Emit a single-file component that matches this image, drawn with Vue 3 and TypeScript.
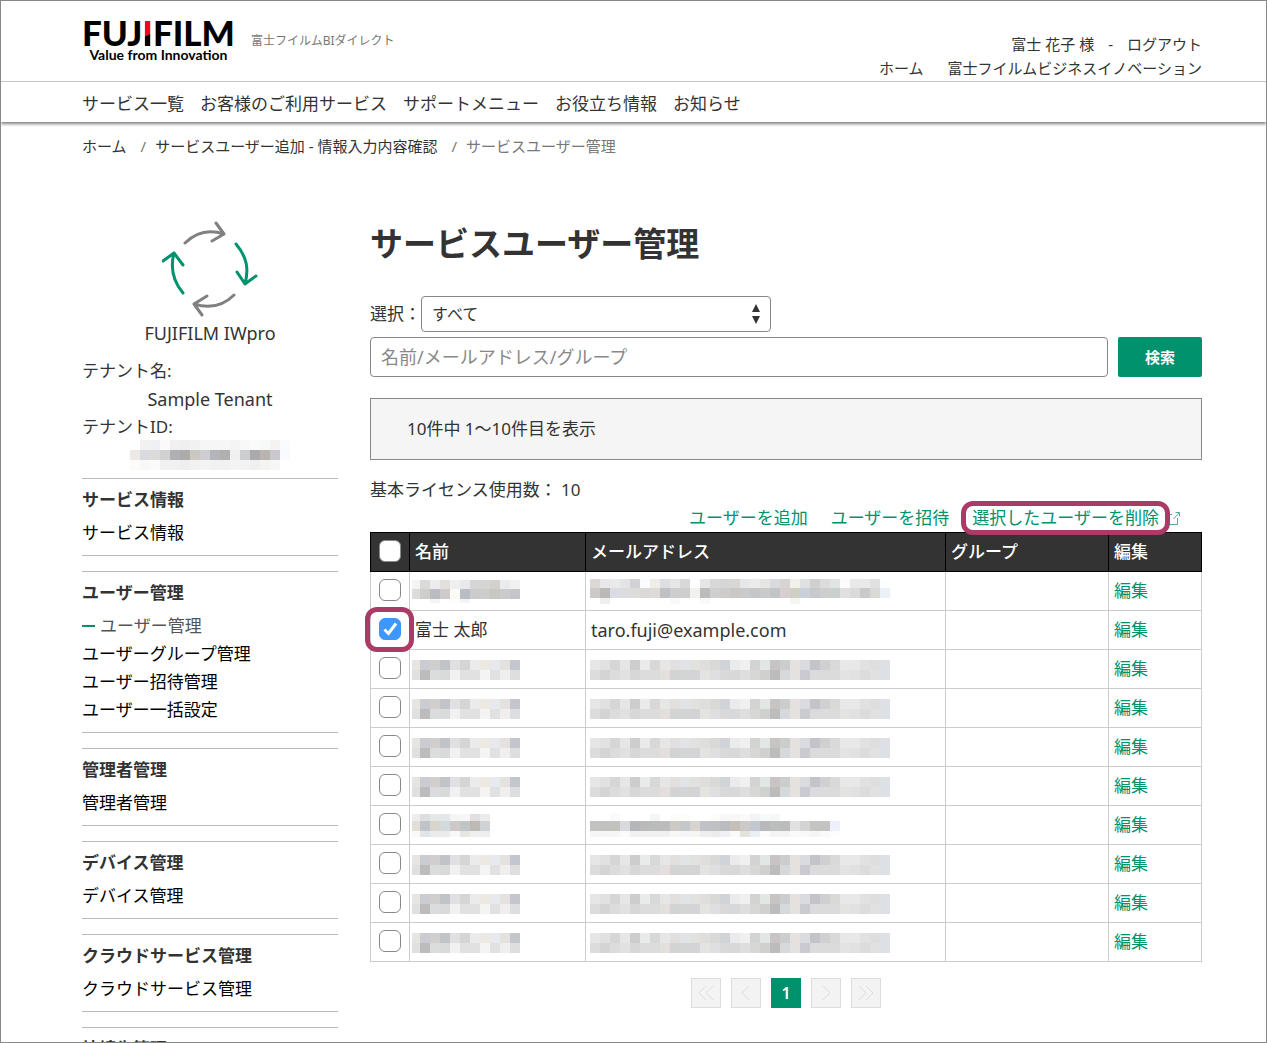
<script setup lang="ts">
import { computed, ref } from 'vue'

interface Cell { x: number; y: number; w: number; h: number; fill: string }
interface Mosaic { width: number; height: number; cells: Cell[] }
interface Row { id: number; name?: string; mail?: string; nameMask?: Mosaic; mailMask?: Mosaic }

// Builds a pixelated mask; "-" leaves a cell empty, firstWidth trims the first column.
function mosaic(lines: string[], heights: number[], firstWidth = 10): Mosaic {
  const cells: Cell[] = []
  let y = 0
  let width = 0
  lines.forEach((line, r) => {
    let x = 0
    line.split(' ').forEach((c, i) => {
      const w = i === 0 ? firstWidth : 10
      if (c !== '-') cells.push({ x, y, w, h: heights[r], fill: '#' + c })
      x += w
    })
    width = Math.max(width, x)
    y += heights[r]
  })
  return { width, height: y, cells }
}

const tenantMask = mosaic([
  '- f1f1f1 eef0f3 fafafa f0f0f0 efefef f1f1f1 f6f6f6 f6f6f6 f6f6f6 f4f4f4 f8f8f8 f9fafb f7f9f9 f4f3f2 f9fbfe',
  'ebeae8 d9dadf dcdbd9 d0d2d2 b0b0b4 acabaa cbc8c1 ccced3 b4b5b8 b0b0af f0f0f0 cccdd1 aaaaab b9b4b1 c9cad0 f8faff',
  'fdfcf9 f8f8f8 fbfbfb f0f1f0 f1f1f1 eeeeee f1f2ef f3f4f3 f0f1f3 f1f1f1 f4f4f4 f2f3f5 f0f0f0 f6f4f1 f6f6f6 -',
], [10, 10, 10])

const nameA = mosaic([
  'f4f4f2 d9dbda ecebed e2dfdc edf0ef e7e9eb d5d5d5 d5d5d3 d3d0cd eaebed f0f1f0',
  'dcdcdc d0cecb bbbcc1 cfcacb f9fbf5 b9bcc5 cccccc cdcdcd c9c7c2 cbcbcb c5c6cb',
  '- - f5f5f7 - fdfdfb f3f4f7',
], [9, 10, 4], 8)
const mailA = mosaic([
  'ddd8d5 e8e8ea e8eaec e2e4e5 d2d2d4 f9fbfe efede8 dcdee2 e6e6e6 d8d8d8 fcfefe e6e6e6 d8d8d8 d6d6d6 d8d7d3 e5e7eb ebebeb e5e5e3 d9dadd d6d3d1 f1f0eb dfe1e0 d0d0d0 dcdcdc e2e4e4 fdfcfa e9e9e9 e9e9e9 dfe0df fbfefd',
  'cdc9c6 bab9b7 d9dce2 dadcdf dddcda dad9d7 dcdbd7 bec0c3 cdcdcf cdcfce f1f1ed bcbbbf cfcfcf cdcccb cac8c5 c9cacc c4c6c8 c8cacb c3c4c6 d7cfcd cfcfc5 cad0da c8c9cd cccfce cacfcf e1dfe0 d9dbda ccc8ca d9dad4 ecf0f9',
  '- eeeeee - - - - - - f9f9f9 - - f9f9f9 - - - - - - - - f6f5f2',
], [9, 10, 6])
const nameB = mosaic([
  'e8e4e1 cbccd1 d0cfcd c0c3c7 e0dfe1 d5d5d5 ebebeb ece8e2 e8e9ef e4e1de c3c6cc',
  'e0e0df bdbbbc dbdcde d9dbda f1f1f1 e0e1e3 e1e1e1 f4f4f2 e1e1e1 f0efed dddee0',
], [10, 10], 8)
const mailB = mosaic([
  'e6e6e6 e1e1e1 d6d6d6 e6e6e6 cdcdcd e9ebea dad8d7 e6e6e6 e1e0de e1e3e6 e3e1de dfdedc d9d9d7 d0d4d8 ebebed f0f0f0 d3d3d1 e2e6e4 c8c4c4 cbcecc e6e1de dadbe0 c5c3c7 d0d0d0 d9d9d7 e8e8e8 e8e8e6 e1e1e1 dedede dde1e6',
  'dcdcdc d4d4d4 dcdcdc e1e1e1 d7d7d7 dcdcdc dcdcdc e4dfdc d2d4d3 d3d5d4 d4d4d6 e3e3df dfdfe1 d9d9d9 d7d8da dedede d7d7d5 d0d0ce bcbcbc d5d9dc e5e1de cacbd0 dbdbde dbdbdb dbdbdb e3e3e1 e1e1e1 dcdcda e1e1e1 dde1e6',
], [10, 10])
const nameC = mosaic([
  'ededed dddedf e6e8e7 e3e7ea f5f5f5 f7f7f7 e1dfe0 ebebeb',
  'e3dfd8 c0c3c9 d8d5cd d2dadd cec9c8 c0c5c5 bebab3 cfd3d7',
  'fdf8f5 e2e5e8 ebebeb ebebeb f7f8fa e6e6e3 efefef ededed',
], [7, 10, 6], 8)
const mailC = mosaic([
  '- - fbf9f9 - - - f5f6f7 - fcfcfa fcfcfa - - fcfcfa f7f7f7 f7f7f7 fafafa f1f5f7 f7fafa f7f7f7',
  'c3c2c0 c1c1bf c3c3bd d9dae0 b4b6bc bababa babcbb bcbcbc cec9c2 c4c8cd d7d3ce c0c2c7 bfc1c2 b9bbbf c6bfb8 cbcac8 c1c9cf b9b9bd bcbdbd bbbdbc e1e1e1 d3d3d3 c4c5c0 c3c4c1 ecf0fa',
  'f5f6f5 f5f5f5 f5f6f6 fbfbfb f0f1f2 f1f1f1 f1f1f1 f0f0f0 f7f7f5 f4f5f7 f7f6f3 ededef ececec eef0f4 fafafa e5e1db eaeff5 fbfbfb f4f4f4 f4f4f4 fafafa f8f8f8 f5f5f5 fafafa fdfdff',
], [7, 10, 6])

const rows: Row[] = Array.from({ length: 10 }, (_, i): Row => {
  if (i === 0) return { id: i, nameMask: nameA, mailMask: mailA }
  if (i === 1) return { id: i, name: '富士 太郎', mail: 'taro.fuji@example.com' }
  if (i === 6) return { id: i, nameMask: nameC, mailMask: mailC }
  return { id: i, nameMask: nameB, mailMask: mailB }
})

const selected = ref<number[]>([1])
const allSelected = computed({
  get: () => selected.value.length === rows.length,
  set: (on: boolean) => { selected.value = on ? rows.map((r) => r.id) : [] },
})
const filter = ref('all')
const keyword = ref('')

const nav = ['サービス一覧', 'お客様のご利用サービス', 'サポートメニュー', 'お役立ち情報', 'お知らせ']
const menu = [
  { title: 'サービス情報', items: ['サービス情報'] },
  { title: 'ユーザー管理', items: ['ユーザー管理', 'ユーザーグループ管理', 'ユーザー招待管理', 'ユーザー一括設定'], current: 0 },
  { title: '管理者管理', items: ['管理者管理'] },
  { title: 'デバイス管理', items: ['デバイス管理'] },
  { title: 'クラウドサービス管理', items: ['クラウドサービス管理'] },
  { title: '接続先管理', items: ['接続先管理'] },
]
</script>

<template>
  <div class="page">
    <header class="header">
      <div class="brand">
        <a class="logo" href="#">
          <span class="logo-name">FUJ<span class="logo-accent">I</span>FILM</span>
          <span class="logo-tag">Value from Innovation</span>
        </a>
        <span class="site-name">富士フイルムBIダイレクト</span>
      </div>
      <div class="account">
        <div class="account-line user-line">
          <span>富士 花子 様</span><span>-</span><a href="#">ログアウト</a>
        </div>
        <div class="account-line site-line">
          <a href="#">ホーム</a><a href="#">富士フイルムビジネスイノベーション</a>
        </div>
      </div>
    </header>

    <nav class="nav">
      <a v-for="n in nav" :key="n" href="#">{{ n }}</a>
    </nav>

    <nav class="crumbs" aria-label="パンくず">
      <a href="#">ホーム</a><span class="sep">/</span>
      <a href="#">サービスユーザー追加 - 情報入力内容確認</a><span class="sep">/</span>
      <span class="here">サービスユーザー管理</span>
    </nav>

    <div class="body">
      <aside class="side">
        <div class="service">
          <svg width="96" height="96" viewBox="0 0 96 96" fill="none" stroke-width="3" stroke-linecap="round" stroke-linejoin="round">
            <g stroke="#808080">
              <path d="M23 22C34 11 47 8 62 13M54 2L62 13L50 20" />
              <path d="M72 74C62 84 48 88 32 83M45 75L32 83L40 94" />
            </g>
            <g stroke="#00916d">
              <path d="M74 23C85 36 87 48 83 63M75 51L83 63L94 55" />
              <path d="M21 72C11 60 8 47 12 32M1 40L12 32L21 44" />
            </g>
          </svg>
          <span class="latin">FUJIFILM IWpro</span>
        </div>
        <dl class="tenant">
          <dt>テナント名:</dt>
          <dd class="latin">Sample Tenant</dd>
          <dt>テナントID:</dt>
          <dd class="masked">
            <svg :width="tenantMask.width" :height="tenantMask.height" shape-rendering="crispEdges">
              <rect v-for="(c, i) in tenantMask.cells" :key="i" :x="c.x" :y="c.y" :width="c.w" :height="c.h" :fill="c.fill" />
            </svg>
          </dd>
        </dl>
        <section v-for="m in menu" :key="m.title" class="menu">
          <h2>{{ m.title }}</h2>
          <ul>
            <li v-for="(it, i) in m.items" :key="it">
              <a href="#" :class="{ current: m.current === i }">{{ it }}</a>
            </li>
          </ul>
        </section>
      </aside>

      <main class="main">
        <h1>サービスユーザー管理</h1>
        <div class="filter">
          <label for="filter">選択：</label>
          <div class="select-box">
            <select id="filter" v-model="filter">
              <option value="all">すべて</option>
            </select>
            <svg width="10" height="20" viewBox="0 0 10 20" fill="#333"><path d="M5 0L9 8H1ZM5 20L9 12H1Z" /></svg>
          </div>
        </div>
        <form class="search" @submit.prevent>
          <input v-model="keyword" type="text" aria-label="検索キーワード" placeholder="名前/メールアドレス/グループ">
          <button type="submit">検索</button>
        </form>
        <p class="count">10件中 1～10件目を表示</p>
        <p class="license">基本ライセンス使用数： 10</p>
        <div class="actions">
          <a href="#">ユーザーを追加</a>
          <a href="#">ユーザーを招待</a>
          <a href="#" class="delete">
            <span class="marked">選択したユーザーを削除</span>
            <svg width="14" height="14" viewBox="0 0 14 14" fill="none" stroke="#4aae94" stroke-width="1">
              <path d="M5 3.500H1.500V13.500H10.500V7M8.500 1.500H12.500V5.500M12.500 1.500L6.500 8" />
            </svg>
          </a>
        </div>

        <table class="users">
          <thead>
            <tr>
              <th class="c-check"><label class="check"><input v-model="allSelected" type="checkbox" aria-label="すべて選択"></label></th>
              <th class="c-name">名前</th>
              <th class="c-mail">メールアドレス</th>
              <th class="c-group">グループ</th>
              <th class="c-edit">編集</th>
            </tr>
          </thead>
          <tbody>
            <tr v-for="r in rows" :key="r.id">
              <td class="c-check">
                <label class="check" :class="{ ringed: r.name }">
                  <input v-model="selected" type="checkbox" :value="r.id" aria-label="ユーザーを選択">
                  <svg v-if="selected.includes(r.id)" width="22" height="22" viewBox="0 0 22 22" fill="none" stroke="#fff" stroke-width="3">
                    <path d="M5.500 11.500L9.500 15.500L17 5.500" />
                  </svg>
                </label>
              </td>
              <td :class="{ 'mask-name': r.nameMask }">
                <svg v-if="r.nameMask" :width="r.nameMask.width" :height="r.nameMask.height" shape-rendering="crispEdges">
                  <rect v-for="(c, i) in r.nameMask.cells" :key="i" :x="c.x" :y="c.y" :width="c.w" :height="c.h" :fill="c.fill" />
                </svg>
                <template v-else>{{ r.name }}</template>
              </td>
              <td :class="r.mailMask ? 'mask-mail' : 'latin'">
                <svg v-if="r.mailMask" :width="r.mailMask.width" :height="r.mailMask.height" shape-rendering="crispEdges">
                  <rect v-for="(c, i) in r.mailMask.cells" :key="i" :x="c.x" :y="c.y" :width="c.w" :height="c.h" :fill="c.fill" />
                </svg>
                <template v-else>{{ r.mail }}</template>
              </td>
              <td></td>
              <td><a href="#">編集</a></td>
            </tr>
          </tbody>
        </table>

        <nav class="pager" aria-label="ページ">
          <button type="button" disabled aria-label="最初"><svg width="16" height="16" viewBox="0 0 16 16"><path d="M8 1L1 8L8 15M15 1L8 8L15 15" /></svg></button>
          <button type="button" disabled aria-label="前"><svg width="16" height="16" viewBox="0 0 16 16"><path d="M11 1L4 8L11 15" /></svg></button>
          <button type="button" class="on">1</button>
          <button type="button" disabled aria-label="次"><svg width="16" height="16" viewBox="0 0 16 16"><path d="M5 1L12 8L5 15" /></svg></button>
          <button type="button" disabled aria-label="最後"><svg width="16" height="16" viewBox="0 0 16 16"><path d="M1 1L8 8L1 15M8 1L15 8L8 15" /></svg></button>
        </nav>
      </main>
    </div>
  </div>
</template>

<style>
body { margin: 0; }
</style>

<style scoped>
.page {
  box-sizing: border-box;
  height: 100vh;
  overflow: hidden;
  border: 1px solid #888;
  background: #fff;
  color: #333;
  font: 400 17px/28px "Noto Sans", "Noto Sans CJK JP", sans-serif;
}
.page *, .page *::before, .page *::after { box-sizing: border-box; }
a { color: inherit; text-decoration: none; }
h1, h2, p, ul, dl, dd { margin: 0; padding: 0; }
ul { list-style: none; }
input, select, button { font: inherit; color: inherit; margin: 0; }
.latin { font-size: 18px; }

.header {
  display: flex;
  justify-content: space-between;
  height: 81px;
  padding: 0 64px 0 81px;
  border-bottom: 1px solid #ccc;
}
.brand { display: flex; gap: 16px; }
.logo { display: flex; flex-direction: column; align-items: center; padding-top: 16px; color: #000; }
.logo-name { font: 900 35px/30px Lato, sans-serif; }
.logo-accent {
  background: linear-gradient(155deg, #fb0020 56%, #000 58%);
  background-clip: text;
  color: transparent;
}
.logo-tag { font: 700 14px/16px Lato, sans-serif; }
.site-name { padding-top: 26px; color: #777; font-size: 12px; }
.account {
  display: flex;
  flex-direction: column;
  justify-content: flex-end;
  align-items: flex-end;
  padding-bottom: 1px;
  font-size: 15px;
  line-height: 24px;
}
.account-line { display: flex; }
.user-line { gap: 14px; }
.site-line { gap: 24px; }

.nav {
  display: flex;
  gap: 16px;
  height: 40px;
  padding: 8px 64px 0 81px;
  box-shadow: 0 2px 3px rgba(0, 0, 0, 0.5);
}
.crumbs { display: flex; gap: 9px; padding: 10px 64px 0 81px; font-size: 15px; }
.sep { color: #777; padding-left: 5px; }
.here { color: #777; }

.body { display: flex; gap: 32px; padding: 61px 64px 0 81px; }
.side { flex: 0 0 256px; }
.service { display: flex; flex-direction: column; align-items: center; gap: 2px; }
.tenant { margin: 10px 0 8px; }
.tenant dd { text-align: center; }
.tenant .masked { height: 30px; }
.masked svg, td svg { display: block; }
.masked svg { margin: -1px auto 0; }
.menu {
  margin-bottom: 15px;
  padding: 7px 0 8px;
  border-top: 1px solid #bbb;
  border-bottom: 1px solid #bbb;
}
.menu h2 { margin-bottom: 5px; font-size: 17px; font-weight: 700; }
.menu li a { color: #000; }
.menu li .current { display: flex; align-items: center; gap: 5px; color: #555; }
.current::before { content: ""; width: 13px; height: 2px; background: #00916d; }

.main { flex: 1; min-width: 0; }
h1 { margin: 3px 0 32px; font-size: 33px; line-height: 40px; font-weight: 700; }
.filter { display: flex; align-items: center; }
.select-box { position: relative; width: 350px; }
.select-box select {
  appearance: none;
  display: block;
  width: 100%;
  height: 36px;
  padding: 0 10px;
  border: 1px solid #888;
  border-radius: 4px;
  background: #fff;
  font-size: 16px;
}
.select-box svg { position: absolute; right: 10px; top: 8px; pointer-events: none; }
.search { display: flex; gap: 10px; margin-top: 5px; }
.search input {
  flex: 1;
  min-width: 0;
  height: 40px;
  padding: 0 10px;
  border: 1px solid #888;
  border-radius: 4px;
  background: #fff;
  font-size: 18px;
}
.search input::placeholder { color: #888; opacity: 1; }
.search button {
  width: 84px;
  height: 40px;
  padding: 0;
  border: 0;
  border-radius: 2px;
  background: #00916d;
  color: #fff;
  font-size: 15px;
  font-weight: 700;
}
.count { margin-top: 21px; padding: 16px 36px; border: 1px solid #888; background: #f5f5f5; }
.license { margin-top: 16px; }
.actions { display: flex; justify-content: flex-end; gap: 23px; padding-right: 21px; color: #00916d; }
.delete { display: flex; align-items: center; gap: 8px; }
.marked { position: relative; }
.marked::after, .ringed::after {
  content: "";
  position: absolute;
  border: 5px solid #ac3a67;
  border-radius: 12px;
  pointer-events: none;
}
.marked::after { inset: -3px -11px; }

.users { width: 100%; border-collapse: collapse; table-layout: fixed; }
.users th, .users td { height: 39px; padding: 0 5px; border: 1px solid #ccc; text-align: left; }
.users th { border-color: #000; background: #333; color: #fff; font-weight: 500; }
.users .c-check { width: 39px; padding: 0 0 2px; }
.users td { line-height: 26px; }
.c-name { width: 176px; }
.c-mail { width: 360px; }
.c-group { width: 163px; }
.users td a { color: #00916d; }
.users .mask-name { padding: 1px 0 0 2px; }
.users .mask-mail { padding: 1px 0 0 4px; }
.check { display: block; position: relative; width: 22px; height: 22px; margin: 0 auto; }
.check input {
  appearance: none;
  display: block;
  width: 22px;
  height: 22px;
  border: 1px solid #888;
  border-radius: 6px;
  background: #fff;
}
.check input:checked { border-color: #3e97fd; background: #3e97fd; }
.check svg { position: absolute; inset: 0; pointer-events: none; }
.ringed::after { inset: -11px -13px -12px -14px; z-index: 1; }

.pager { display: flex; justify-content: center; gap: 10px; margin-top: 16px; }
.pager button {
  display: flex;
  align-items: center;
  justify-content: center;
  width: 30px;
  height: 30px;
  padding: 0;
  border: 1px solid #ddd;
  background: #f3f3f3;
}
.pager svg { fill: none; stroke: #ddd; stroke-width: 1; }
.pager .on { border-color: #00916d; background: #00916d; color: #fff; font-size: 16px; font-weight: 600; }
</style>
